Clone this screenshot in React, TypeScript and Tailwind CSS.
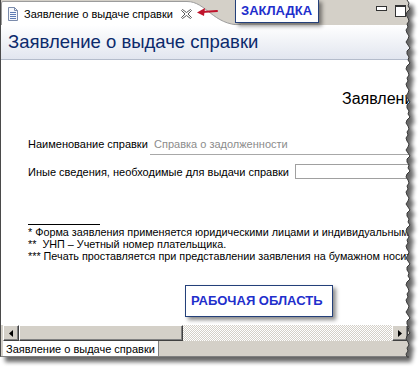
import React from "react";

const OFFS = [1, 3, 2, 4, 1, 0, 2, 3, 1, 2, 0, 1, 3, 2, 0, 2, 4, 1];
const BOTTOM = 357;

function edgePoints() {
  const pts: [number, number][] = [];
  let i = 0;
  for (let y = 0; y <= BOTTOM; y += 3) {
    pts.push([406 + OFFS[i % OFFS.length], y]);
    i++;
  }
  pts.push([406 + OFFS[i % OFFS.length], BOTTOM]);
  return pts;
}

function TornEdge() {
  const pts = edgePoints();
  const jag = pts.map(([x, y]) => `L${x},${y}`).join(" ");
  const outside = `M420,0 L${pts[0][0]},0 ${jag} L0,${BOTTOM} L0,369 L420,369 Z`;
  const frame = `M0,0 ${jag} L0,${BOTTOM} Z`;
  const line = pts.map(([x, y]) => `${x},${y}`).join(" ");
  return (
    <svg className="absolute left-0 top-0 pointer-events-none" width="420" height="369">
      <defs>
        <filter id="blr" x="-20%" y="-20%" width="140%" height="140%">
          <feGaussianBlur stdDeviation="2.2" />
        </filter>
        <clipPath id="outs">
          <path d={outside} />
        </clipPath>
      </defs>
      <path d={outside} fill="#ffffff" />
      <g clipPath="url(#outs)">
        <path d={frame} transform="translate(5,5)" fill="#000" opacity="0.6" filter="url(#blr)" />
      </g>
      <polyline points={line} fill="none" stroke="#3a3a3a" strokeWidth="1" />
    </svg>
  );
}

function DocIcon() {
  return (
    <svg width="10" height="14" viewBox="0 0 10 14">
      <path d="M0.5,0.5 H6.5 L9.5,3.5 V13.5 H0.5 Z" fill="#f5f7fb" stroke="#7b8bab" />
      <path d="M6.5,0.5 V3.5 H9.5" fill="none" stroke="#7b8bab" />
      <path d="M2,5.5 H8 M2,7.5 H8 M2,9.5 H8 M2,11.5 H8" stroke="#5d7bb4" />
    </svg>
  );
}

function CloseIcon() {
  return (
    <svg width="11" height="10" viewBox="0 0 11 10">
      <polygon
        points="0.5,1.5 1.5,0.5 5.5,3.5 9.5,0.5 10.5,1.5 7,5 10.5,8.5 9.5,9.5 5.5,6.5 1.5,9.5 0.5,8.5 4,5"
        fill="#ffffff"
        stroke="#5a5a5a"
        strokeWidth="1"
      />
    </svg>
  );
}

function Btn3D({ children, className = "" }: { children?: React.ReactNode; className?: string }) {
  return (
    <div
      className={
        "h-full shrink-0 bg-[#d4d0c8] border border-t-white border-l-white border-r-[#404040] border-b-[#404040] shadow-[inset_-1px_-1px_0_#808080] flex items-center justify-center " +
        className
      }
    >
      {children}
    </div>
  );
}

export default function App() {
  return (
    <div className="relative w-[420px] h-[369px] bg-white overflow-hidden font-['Liberation_Sans',Arial,sans-serif] text-[11px] text-black">
      <div className="w-[412px] h-[357px] flex flex-col border-l border-[#4a4a4a] border-b border-b-[#808080] bg-white">
        {/* top tab bar */}
        <div className="relative h-[25px] shrink-0 bg-[#d4d0c8] flex items-start">
          <svg className="absolute left-0 top-0" width="250" height="25">
            <path d="M0,25 L0,3 Q0,1.5 2,1.5 L186,1.5 C205,1.5 212,25 240,25 Z" fill="#ffffff" />
            <path d="M0.5,25 L0.5,3 Q0.5,1.5 2,1.5 L186,1.5 C205,1.5 212,25 240,25" fill="none" stroke="#9c9c9c" />
          </svg>
          <div className="relative flex items-center h-[24px] pl-[7px] pt-[3px]">
            <DocIcon />
            <span className="ml-[6px] whitespace-nowrap leading-[14px]">Заявление о выдаче справки</span>
            <span className="ml-[8px] flex"><CloseIcon /></span>
          </div>
          <div className="relative ml-auto flex items-start gap-[8px] pr-[6px] pt-[5px]">
            <div className="mt-[1px] w-[11px] h-[5px] border border-[#333] bg-white" />
            <div className="w-[11px] h-[12px] border border-[#333] border-t-[2px] bg-white" />
          </div>
        </div>

        {/* header */}
        <div className="h-[35px] shrink-0 flex items-center pl-[7px] border-b border-[#b4bccb] bg-gradient-to-b from-white to-[#e2e6ef]">
          <span className="text-[18.5px] leading-[20px] text-[#0c2a6c] whitespace-nowrap">Заявление о выдаче справки</span>
        </div>

        {/* content */}
        <div className="relative flex-1 min-h-0 overflow-hidden bg-white">
          <div className="mt-[30px] pl-[341px] text-[16px] leading-[18px] whitespace-nowrap">Заявление о выдаче справки</div>

          <div className="mt-[29px] flex items-start h-[18px] pl-[27px] whitespace-nowrap">
            <span className="w-[122px] leading-[14px] shrink-0">Наименование справки</span>
            <div className="w-[300px] h-[18px] shrink-0 border-b border-[#a8a8a8] pl-[4px] leading-[14px] text-[#8c8c8c]">
              Справка о задолженности
            </div>
          </div>

          <div className="mt-[9px] flex items-center h-[15px] pl-[27px] whitespace-nowrap">
            <span className="w-[267px] leading-[14px] shrink-0">Иные сведения, необходимые для выдачи справки</span>
            <div className="w-[200px] h-[15px] shrink-0 border border-[#a0a0a0] bg-white" />
          </div>

          <div className="mt-[45px] ml-[27px] w-[72px] h-0 border-t border-black" />
          <div className="mt-[1px] pl-[27px] text-[10.8px] leading-[12px] whitespace-pre">
            <div>* Форма заявления применяется юридическими лицами и индивидуальными предпринимателями</div>
            <div>**  УНП – Учетный номер плательщика.</div>
            <div>*** Печать проставляется при представлении заявления на бумажном носителе</div>
          </div>
        </div>

        {/* horizontal scrollbar */}
        <div className="h-[16px] shrink-0 flex pl-[2px] bg-[#d4d0c8]">
          <Btn3D className="w-[16px]">
            <svg width="4" height="7" viewBox="0 0 4 7"><polygon points="4,0 0,3.5 4,7" fill="#000" /></svg>
          </Btn3D>
          <Btn3D className="w-[164px]" />
          <div className="flex-1 h-full bg-[image:repeating-conic-gradient(#d4d0c8_0%_25%,#ffffff_0%_50%)] bg-[length:2px_2px]" />
          <Btn3D className="w-[16px]">
            <svg width="4" height="7" viewBox="0 0 4 7"><polygon points="0,0 4,3.5 0,7" fill="#000" /></svg>
          </Btn3D>
          <div className="w-[4px] shrink-0" />
        </div>

        {/* bottom tab bar */}
        <div className="h-[15px] shrink-0 flex items-stretch pl-[2px] bg-[#d4d0c8]">
          <div className="w-[156px] bg-white border-r border-[#808080] pl-[3px] flex items-center whitespace-nowrap leading-[14px]">
            Заявление о выдаче справки
          </div>
        </div>
      </div>

      <TornEdge />

      {/* red arrow */}
      <svg className="absolute left-[196px] top-[6px]" width="22" height="12" viewBox="0 0 22 12">
        <path d="M6,6 L21,5" stroke="#c0142c" strokeWidth="2" strokeLinecap="round" />
        <polygon points="1,6.5 9,2 8,10" fill="#c0142c" />
      </svg>

      {/* callout tab */}
      <div className="absolute left-[235px] top-[-1px] w-[84px] h-[24px] bg-white border border-[#24407a] shadow-[3px_3px_4px_rgba(0,0,0,0.45)] flex items-center pl-[5px]">
        <span className="font-bold text-[13px] leading-[14px] text-[#1f2fcc] whitespace-nowrap">ЗАКЛАДКА</span>
      </div>

      {/* callout work area */}
      <div className="absolute left-[185px] top-[285px] w-[148px] h-[32px] bg-white border border-[#24407a] shadow-[3px_3px_4px_rgba(0,0,0,0.45)] flex items-center pl-[5px]">
        <span className="font-bold text-[13px] leading-[14px] text-[#1f2fcc] whitespace-nowrap">РАБОЧАЯ ОБЛАСТЬ</span>
      </div>
    </div>
  );
}
